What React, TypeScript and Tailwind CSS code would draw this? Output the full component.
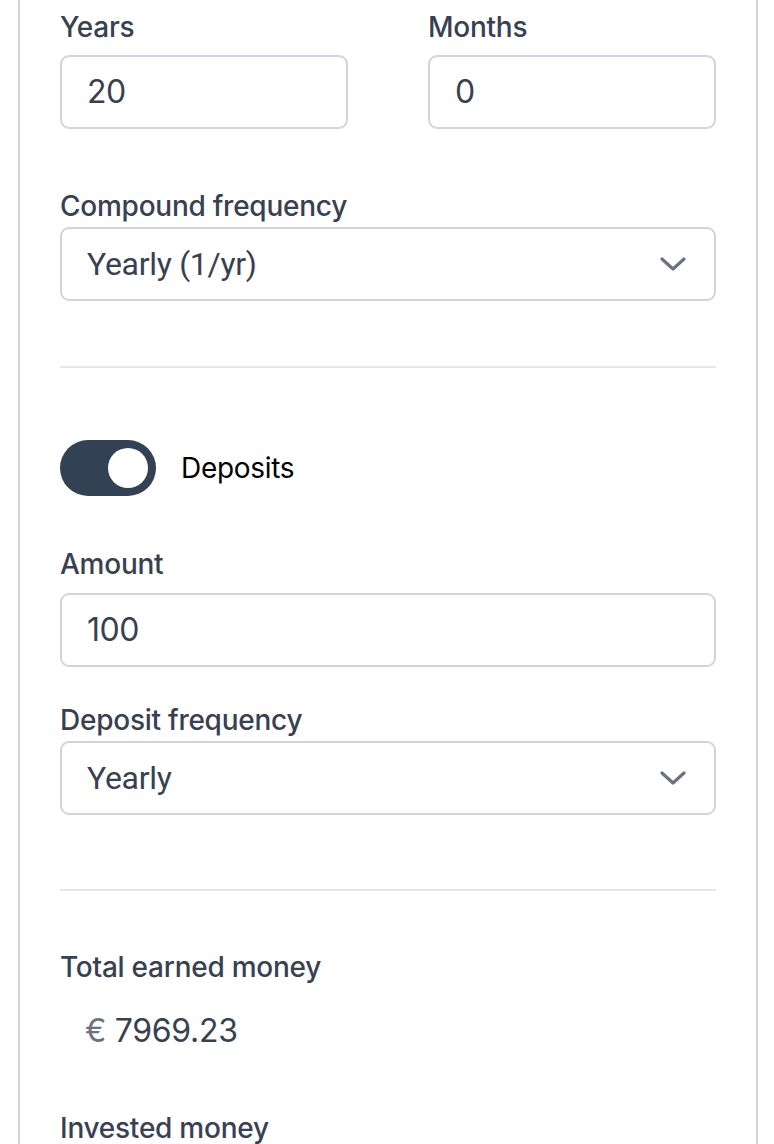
import React from "react";

const font = { fontFamily: "Inter, 'Noto Sans', sans-serif" };

function Label({ children, className = "" }: { children: React.ReactNode; className?: string }) {
  return (
    <div className={`text-[28px] leading-[40px] font-medium tracking-[-0.25px] text-[#374151] ${className}`}>{children}</div>
  );
}

function Input({ value, className = "" }: { value: string; className?: string }) {
  return (
    <div
      className={`h-[74px] border-2 border-[#d1d5db] rounded-[9px] flex items-center pl-[25px] text-[32px] tracking-[-0.5px] text-[#374151] ${className}`}
    >
      {value}
    </div>
  );
}

function Chevron() {
  return (
    <svg width="26" height="16" viewBox="0 0 26 16" fill="none">
      <path d="M2 3 L13 13 L24 3" stroke="#6b7280" strokeWidth="3.2" strokeLinecap="round" strokeLinejoin="round" />
    </svg>
  );
}

function Select({ value, className = "" }: { value: string; className?: string }) {
  return (
    <div
      className={`h-[74px] border-2 border-[#d1d5db] rounded-[9px] flex items-center justify-between pl-[25px] pr-[28px] text-[32px] text-[#374151] ${className}`}
    >
      <span className="tracking-[-0.3px]" style={{ fontFamily: "Roboto, 'Liberation Sans', sans-serif" }}>{value}</span>
      <Chevron />
    </div>
  );
}

export default function App() {
  return (
    <div className="bg-white min-h-screen w-[774px] overflow-hidden" style={font}>
      <div className="ml-[18px] mr-[16px] border-x-2 border-[#d1d5db] px-[40px] pt-[7px] pb-[40px] min-h-[1144px]">
        <div className="grid grid-cols-2 gap-x-[80px]">
          <div>
            <Label>Years</Label>
            <Input value="20" className="mt-[8px]" />
          </div>
          <div>
            <Label>Months</Label>
            <Input value="0" className="mt-[8px]" />
          </div>
        </div>

        <Label className="mt-[57px]">Compound frequency</Label>
        <Select value="Yearly (1/yr)" className="mt-[1px]" />

        <div className="mt-[65px] h-[2px] bg-[#e5e7eb]" />

        <div className="mt-[72px] flex items-center">
          <div className="w-[96px] h-[56px] rounded-full bg-[#334155] flex items-center justify-end pr-[8px]">
            <div className="w-[40px] h-[40px] rounded-full bg-white" />
          </div>
          <span className="ml-[25px] text-[28px] tracking-[-0.3px] text-black">Deposits</span>
        </div>

        <Label className="mt-[48px]">Amount</Label>
        <Input value="100" className="mt-[9px]" />

        <Label className="mt-[33px]">Deposit frequency</Label>
        <Select value="Yearly" className="mt-[1px]" />

        <div className="mt-[74px] h-[2px] bg-[#e5e7eb]" />

        <Label className="mt-[56px]">Total earned money</Label>
        <div className="mt-[20px] pl-[25px] text-[32px] leading-[48px] tracking-[-0.3px] text-[#374151]">
          <span className="text-[#6b7280]">€</span> 7969.23
        </div>

        <Label className="mt-[53px]">Invested money</Label>
      </div>
    </div>
  );
}
